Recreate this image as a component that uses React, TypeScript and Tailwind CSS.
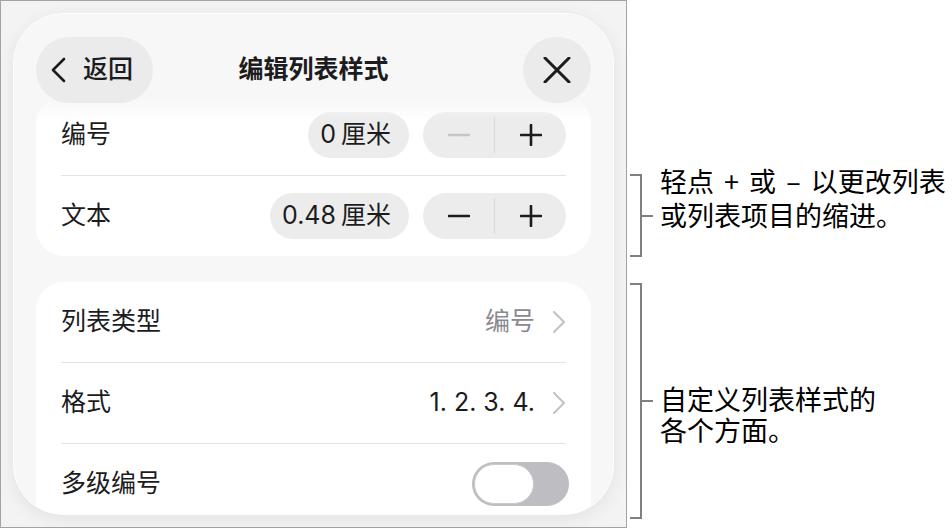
import React from "react";

const Minus = ({ disabled }: { disabled?: boolean }) => (
  <svg width="22" height="22" viewBox="0 0 22 22">
    <path d="M1 11h20" stroke={disabled ? "#c6c6c8" : "#1c1c1e"} strokeWidth="2.6" strokeLinecap="round" />
  </svg>
);

const Plus = () => (
  <svg width="22" height="22" viewBox="0 0 22 22">
    <path d="M1 11h20M11 1v20" stroke="#1c1c1e" strokeWidth="2.6" strokeLinecap="round" />
  </svg>
);

const ChevronRight = () => (
  <svg width="14" height="24" viewBox="0 0 14 24" fill="none">
    <path d="M2 2l10 10-10 10" stroke="#c4c4c7" strokeWidth="2.2" strokeLinecap="round" strokeLinejoin="round" />
  </svg>
);

const Stepper = ({ minusDisabled }: { minusDisabled?: boolean }) => (
  <div className="flex items-center w-[143px] h-[46px] rounded-full bg-[#ececec]">
    <div className="flex-1 flex justify-center">
      <Minus disabled={minusDisabled} />
    </div>
    <div className="w-px h-[36px] bg-[#d9d9d9]" />
    <div className="flex-1 flex justify-center">
      <Plus />
    </div>
  </div>
);

const ValuePill = ({ num }: { num: string }) => (
  <div className="h-[46px] pl-[12px] pr-[18px] rounded-full bg-[#ececec] flex items-center text-[25px] text-[#1c1c1e]">
    <span>{num}</span>
    <span className="ml-[5px]">厘米</span>
  </div>
);

const Divider = () => <div className="h-px bg-[#e3e3e3]" />;

const Row = ({ label, children }: { label: string; children?: React.ReactNode }) => (
  <div className="h-[80px] flex items-center justify-between">
    <div className="text-[25px] text-[#1c1c1e]">{label}</div>
    <div className="flex items-center gap-[14px]">{children}</div>
  </div>
);

const Bracket = ({ height }: { height: number }) => (
  <div className="flex items-center" style={{ height }}>
    <div className="w-[12px] h-full border-y-2 border-r-2 border-[#808080]" />
    <div className="w-[11px] h-[2px] bg-[#808080]" />
  </div>
);

export default function App() {
  return (
    <div className="w-[952px] h-[529px] bg-white flex font-['Inter','Noto_Sans_CJK_SC',sans-serif]">
      <div className="w-[627px] h-[528px] border border-[#a3a3a3] bg-[#f3f3f3] p-[12px]">
        <div className="relative h-[502px] rounded-[50px] overflow-hidden bg-[#f7f7f7] border border-white shadow-[0_4px_18px_rgba(0,0,0,0.07)] px-[22px] pt-[81px]">
          <div className="rounded-[28px] bg-white px-[25px]">
            <Row label="编号">
              <ValuePill num="0" />
              <Stepper minusDisabled />
            </Row>
            <Divider />
            <Row label="文本">
              <ValuePill num="0.48" />
              <Stepper />
            </Row>
          </div>

          <div className="mt-[26px] rounded-[28px] bg-white px-[25px] pb-[20px]">
            <Row label="列表类型">
              <div className="flex items-center gap-[17px]">
                <span className="text-[25px] text-[#8a8a8e]">编号</span>
                <ChevronRight />
              </div>
            </Row>
            <Divider />
            <Row label="格式">
              <div className="flex items-center gap-[17px]">
                <span className="text-[25px] text-[#1c1c1e]">1. 2. 3. 4.</span>
                <ChevronRight />
              </div>
            </Row>
            <Divider />
            <Row label="多级编号">
              <div className="w-[97px] h-[44px] rounded-full bg-[#bdbdc2] p-[2px] flex items-center -mr-[3px]">
                <div className="w-[60px] h-[40px] rounded-full bg-white border border-[#c9c9cd]" />
              </div>
            </Row>
          </div>

          <div className="absolute inset-x-0 top-0 h-[106px] bg-linear-to-b from-[#f7f7f7] from-80% to-[#f7f7f700] px-[22px] pt-[23px]">
            <div className="grid grid-cols-[1fr_auto_1fr] items-center">
              <div className="justify-self-start w-[117px] h-[66px] rounded-full bg-[#ebebeb] flex items-center pl-[14px] gap-[17px]">
                <svg width="16" height="26" viewBox="0 0 16 26" fill="none">
                  <path d="M14 2L3 13l11 11" stroke="#1c1c1e" strokeWidth="2.6" strokeLinecap="round" strokeLinejoin="round" />
                </svg>
                <span className="text-[25px] font-medium text-[#1c1c1e]">返回</span>
              </div>
              <div className="text-[25px] font-semibold text-[#1c1c1e]">编辑列表样式</div>
              <div className="justify-self-end w-[68px] h-[66px] rounded-full bg-[#ebebeb] flex items-center justify-center">
                <svg width="28" height="26" viewBox="0 0 28 26" fill="none">
                  <path d="M2 1l24 24M26 1L2 25" stroke="#1c1c1e" strokeWidth="3" strokeLinecap="round" />
                </svg>
              </div>
            </div>
          </div>
        </div>
      </div>

      <div className="flex-1 pt-[164px] pl-[3px] font-['Noto_Sans_CJK_SC',sans-serif] text-[27px] text-black">
        <div className="flex items-start">
          <div className="mt-[10px]">
            <Bracket height={83} />
          </div>
          <div className="ml-[7px] leading-[34px] whitespace-nowrap">
            <div className="[word-spacing:4px]">轻点 + 或 – 以更改列表</div>
            <div>或列表项目的缩进。</div>
          </div>
        </div>
        <div className="mt-[26px] flex items-start">
          <Bracket height={236} />
          <div className="ml-[7px] mt-[100px] leading-[31px] whitespace-nowrap">
            <div>自定义列表样式的</div>
            <div>各个方面。</div>
          </div>
        </div>
      </div>
    </div>
  );
}
